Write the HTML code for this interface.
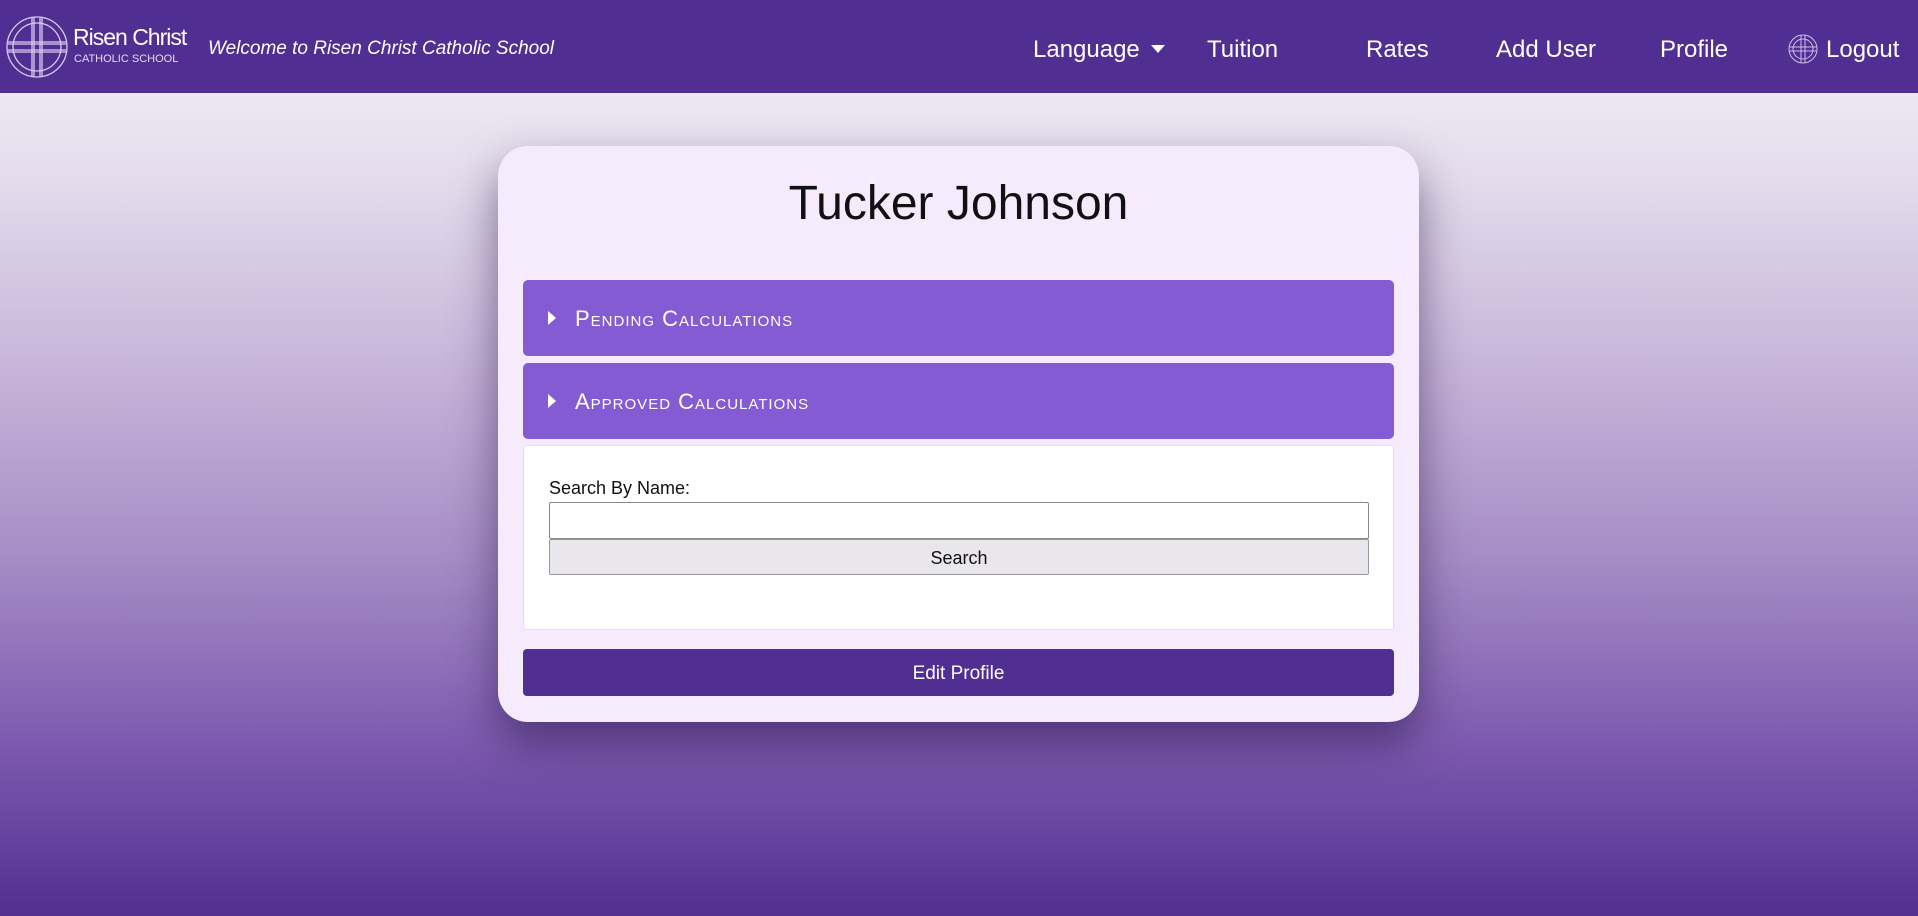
<!DOCTYPE html>
<html><head><style>
*{box-sizing:border-box;margin:0;padding:0}
body{width:1918px;height:916px;overflow:hidden;font-family:"Liberation Sans",sans-serif;background:linear-gradient(to bottom,#ece8f2 93px,#e4dcec 180px,#c4b2d8 380px,#a58cc5 560px,#7e5bb0 740px,#522f90 916px);position:relative}
.nav{position:absolute;left:0;top:0;width:1918px;height:93px;background:#512e91;color:#fff}
.nav .it{position:absolute;top:36px;font-size:24px;line-height:28px}
.card{position:absolute;left:498px;top:146px;width:921px;height:576px;background:#f6ebfd;border-radius:30px;box-shadow:0 22px 45px rgba(40,20,70,.55)}
h1{position:absolute;left:0;width:921px;top:30px;text-align:center;font-weight:normal;font-size:48px;color:#111}
.acc{position:absolute;left:25px;width:871px;height:76px;background:#855bd4;border-radius:5px;color:#fff;font-size:22px;font-variant:small-caps;letter-spacing:1px}
.acc span{position:absolute;left:52px;top:26px}
.acc i{position:absolute;left:25px;top:31px;width:0;height:0;border-top:7px solid transparent;border-bottom:7px solid transparent;border-left:8px solid #fff}
.box{position:absolute;left:25px;top:299px;width:871px;height:185px;background:#fff;border:1px solid #e8dcef;border-radius:3px}
.edit{position:absolute;left:25px;top:503px;width:871px;height:47px;background:#512e91;border-radius:4px;color:#fff;font-size:19px;text-align:center;line-height:49px}
</style></head><body>
<div class="nav">
<svg style="position:absolute;left:5px;top:15px" width="64" height="64" viewBox="0 0 64 64" fill="none" stroke="#d8cdf0" stroke-width="1.3"><circle cx="32" cy="32" r="30"/><circle cx="32" cy="32" r="24"/><path d="M27 3v58M37 3v58M3 27h58M3 37h58M29 3v58M35 3v58M3 29h58M3 35h58"/></svg>
<div style="position:absolute;left:73px;top:24px;font-size:23px;letter-spacing:-1px">Risen Christ</div>
<div style="position:absolute;left:74px;top:53px;font-size:11px;color:#e3daf3">CATHOLIC SCHOOL</div>
<div style="position:absolute;left:208px;top:38px;font-size:19px;font-style:italic">Welcome to Risen Christ Catholic School</div>
<div class="it" style="left:1033px">Language</div>
<div style="position:absolute;left:1151px;top:45px;border-left:7px solid transparent;border-right:7px solid transparent;border-top:8px solid #fff"></div>
<div class="it" style="left:1207px">Tuition</div>
<div class="it" style="left:1366px">Rates</div>
<div class="it" style="left:1496px">Add User</div>
<div class="it" style="left:1660px">Profile</div>
<svg style="position:absolute;left:1788px;top:34px" width="30" height="30" viewBox="0 0 30 30" fill="none" stroke="#cdbfe8" stroke-width="1"><circle cx="15" cy="15" r="14"/><circle cx="15" cy="15" r="10"/><path d="M13 1v28M17 1v28M1 13h28M1 17h28"/></svg>
<div class="it" style="left:1826px">Logout</div>
</div>
<div class="card">
<h1>Tucker Johnson</h1>
<div class="acc" style="top:134px"><i></i><span>Pending Calculations</span></div>
<div class="acc" style="top:217px"><i></i><span>Approved Calculations</span></div>
<div class="box">
<div style="position:absolute;left:25px;top:32px;font-size:18px;color:#111">Search By Name:</div>
<div style="position:absolute;left:25px;top:56px;width:820px;height:37px;border:1px solid #888;border-radius:2px;background:#fff"></div>
<div style="position:absolute;left:25px;top:93px;width:820px;height:36px;border:1px solid #999;border-radius:2px;background:#e9e7ec;text-align:center;line-height:36px;font-size:18px;color:#111">Search</div>
</div>
<div class="edit">Edit Profile</div>
</div>
</body></html>
